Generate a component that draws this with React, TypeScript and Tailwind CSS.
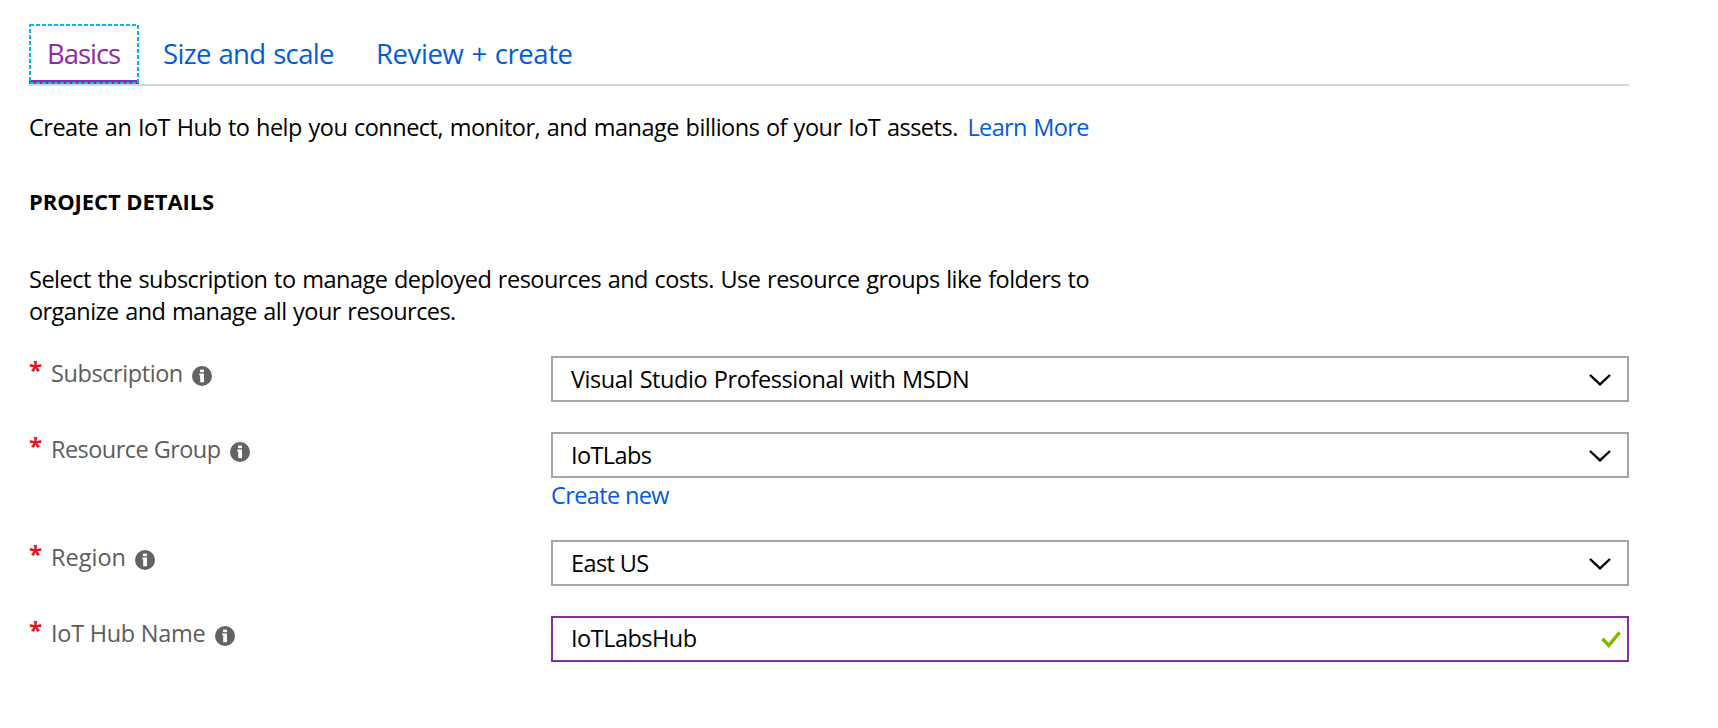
import type { ReactNode } from 'react';

function InfoIcon() {
  return (
    <svg className="mt-1.5 ml-[9.5px] h-5 w-5 shrink-0" viewBox="0 0 20 20">
      <circle cx="10" cy="10" r="10" fill="#636363" />
      <rect x="8" y="3.6" width="4" height="2.6" rx="0.8" fill="#fff" />
      <path d="M7.2 7.6H12v8.6H8.2V9.2h-1z" fill="#fff" />
    </svg>
  );
}

function Chevron() {
  return (
    <svg className="mt-px mr-4 h-3 w-[22px]" viewBox="0 0 22 12" fill="none">
      <path d="M1 1l10 9.4L21 1" stroke="#000" strokeWidth="2.4" />
    </svg>
  );
}

function Check() {
  return (
    <svg className="mt-px mr-1.5 h-[17px] w-5" viewBox="0 0 20 17" fill="none">
      <path d="M1.4 7.8l6.4 6.6L18.6 1.4" stroke="#7fba00" strokeWidth="3.5" />
    </svg>
  );
}

function Field({ label, labelClass, className, children }: { label: string; labelClass: string; className: string; children: ReactNode }) {
  return (
    <div className={'flex ' + className}>
      <div className="mt-px flex h-8 w-[522px] items-center text-[#5c5c5c]">
        <span className="h-[38px] w-[22px] text-[24px] leading-8 font-bold text-[#e81123]">*</span>
        <span className={labelClass}>{label}</span>
        <InfoIcon />
      </div>
      <div className="w-[1078px]">{children}</div>
    </div>
  );
}

function Box({ value, valueClass, active, children }: { value: string; valueClass: string; active?: boolean; children: ReactNode }) {
  return (
    <div className={'flex h-[46px] items-center justify-between border-2 pl-[18px] ' + (active ? 'border-[#8a2da5]' : 'border-[#a6a6a6]')}>
      <span className={valueClass}>{value}</span>
      {children}
    </div>
  );
}

export default function App() {
  return (
    <main className="h-[728px] w-[1718px] overflow-hidden bg-white pt-6 pl-[29px] font-['Open_Sans',sans-serif] text-[23.5px] leading-8 whitespace-nowrap text-black">
      <nav className="flex h-[62px] w-[1600px] border-b-2 border-[#d6d6d6] text-[27.5px] leading-9 text-[#015cda]">
        <div className="relative h-[60px] w-[110px] border-b-4 border-[#8a2da5] pt-3 pl-[18px] tracking-[-1.05px] text-[#8a2da5]">
          Basics
          <svg className="absolute top-0 left-0 h-[60px] w-[110px]" viewBox="0 0 110 60" fill="none">
            <rect x="1" y="1" width="108" height="58" stroke="#00bcf2" strokeWidth="2" strokeDasharray="4 2" />
          </svg>
        </div>
        <div className="w-[224px] pt-3 pl-6 tracking-[-0.65px] [word-spacing:1.2px]">Size and scale</div>
        <div className="pt-3 pl-[13px] tracking-[-0.4px] [word-spacing:1.2px]">Review + create</div>
      </nav>

      <p className="mt-[25px] flex">
        <span className="w-[938.5px] tracking-[-0.5px] [word-spacing:1px]">Create an IoT Hub to help you connect, monitor, and manage billions of your IoT assets.</span>
        <a className="tracking-[-0.65px] text-[#015cda] [word-spacing:1px]">Learn More</a>
      </p>

      <h2 className="mt-[42px] text-[22px] font-bold tracking-[-0.08px]">PROJECT DETAILS</h2>

      <p className="mt-[46px]">
        <span className="block tracking-[-0.51px] [word-spacing:1px]">Select the subscription to manage deployed resources and costs. Use resource groups like folders to</span>
        <span className="block tracking-[-0.56px] [word-spacing:1px]">organize and manage all your resources.</span>
      </p>

      <Field label="Subscription" labelClass="tracking-[-0.42px]" className="mt-[29px] h-[76px]">
        <Box value="Visual Studio Professional with MSDN" valueClass="tracking-[-0.43px] [word-spacing:1px]"><Chevron /></Box>
      </Field>
      <Field label="Resource Group" labelClass="tracking-[-0.55px]" className="h-[108px]">
        <Box value="IoTLabs" valueClass="tracking-[-0.6px]"><Chevron /></Box>
        <a className="mt-[1px] block tracking-[-0.62px] text-[#015cda]">Create new</a>
      </Field>
      <Field label="Region" labelClass="tracking-[0px]" className="h-[76px]">
        <Box value="East US" valueClass="tracking-[-0.6px]"><Chevron /></Box>
      </Field>
      <Field label="IoT Hub Name" labelClass="tracking-[-0.28px]" className="h-[46px]">
        <Box value="IoTLabsHub" valueClass="tracking-[-0.5px] pb-0.5" active><Check /></Box>
      </Field>
    </main>
  );
}
